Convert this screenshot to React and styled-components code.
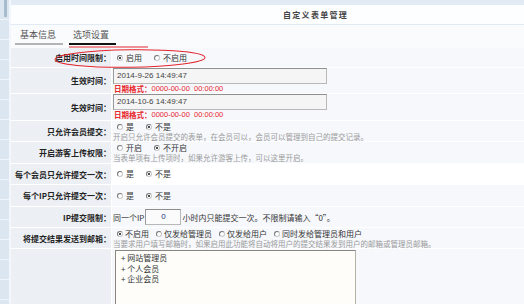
import React from "react";
import styled, { createGlobalStyle } from "styled-components";

const GlobalStyle = createGlobalStyle`
  html, body { margin: 0; padding: 0; background: #fff; }
  body { font-family: "Noto Sans CJK SC", "Liberation Sans", sans-serif; color: #333; }
  * { box-sizing: border-box; }
`;

const Page = styled.div`
  position: relative;
  display: flex;
  width: 524px;
  height: 304px;
  overflow: hidden;
`;

const Sidebar = styled.div`
  width: 11px;
  flex: none;
  background: repeating-linear-gradient(180deg, #dbe6f1 0 19px, #eef4f9 19px 20px);
  border-right: 2px solid #f3f7fb;
  padding-left: 4px;
`;

const Thumb = styled.div`
  width: 3px;
  height: 17px;
  background: #a9bccf;
`;

const Main = styled.div`
  flex: 1;
  display: flex;
  flex-direction: column;
  min-width: 0;
  & > * { flex: none; }
`;

const TopBand = styled.div`
  height: 5px;
  background: #e2eaf3;
`;

const Header = styled.div`
  height: 20px;
  background: #fdfeff;
  border-bottom: 1px solid #e2eaf4;
  display: flex;
  align-items: center;
  padding-left: 272px;
  font-size: 8px;
  font-weight: bold;
  letter-spacing: 1.3px;
  color: #444;
`;

const TabBar = styled.div`
  height: 23px;
  background: #fafbfd;
  display: flex;
  align-items: flex-start;
  gap: 6px;
  padding: 0 0 0 4px;
`;

const Tab = styled.div`
  width: ${(p) => p.$w}px;
  height: 20px;
  padding-left: ${(p) => p.$pl}px;
  padding-top: 4px;
  font-size: 9px;
  line-height: 12px;
  color: #555;
  border-bottom: 2px solid ${(p) => (p.$active ? "#111" : "#b4b4b4")};
`;

const Table = styled.div`
  display: flex;
  flex-direction: column;
`;

const Row = styled.div`
  display: grid;
  grid-template-columns: 101px 1fr;
  height: ${(p) => p.$h}px;
  border-bottom: 1px solid #fff;
  flex: none;
`;

const Label = styled.div`
  background: #ecf0f5;
  border-right: 1px solid #fff;
  display: flex;
  align-items: center;
  justify-content: flex-end;
  font-size: 8px;
  font-weight: bold;
  color: #222;
  white-space: nowrap;
`;

const Value = styled.div`
  background: ${(p) => (p.$white ? "#ffffff" : "#f6f8fc")};
  display: flex;
  flex-direction: column;
  justify-content: ${(p) => (p.$top ? "flex-start" : "center")};
  padding-left: 1px;
  padding-top: ${(p) => p.$pt || 0}px;
  font-size: 8px;
  color: #333;
  white-space: nowrap;
  min-width: 0;
`;

const Radios = styled.div`
  display: flex;
  align-items: center;
  height: 10px;
`;

const RadioItem = styled.label`
  display: flex;
  align-items: center;
  margin-right: ${(p) => p.$mr ?? 8}px;
  line-height: 10px;
`;

const Dot = styled.span`
  width: 6px;
  height: 6px;
  border-radius: 50%;
  border: 1px solid #777;
  border-right-color: #c8c8c8;
  border-bottom-color: #c8c8c8;
  background: #fff;
  margin: 0 ${(p) => p.$gap ?? 3}px 0 4px;
  position: relative;
  flex: none;
  &::after {
    content: "";
    display: ${(p) => (p.$on ? "block" : "none")};
    position: absolute;
    left: 1px;
    top: 1px;
    width: 2px;
    height: 2px;
    border-radius: 50%;
    background: #111;
  }
`;

const Hint = styled.div`
  font-size: 7.5px;
  line-height: 9px;
  color: #9a9a9a;
`;

const DateHint = styled.div`
  display: flex;
  align-items: center;
  height: 9px;
  font-size: 7.5px;
  line-height: 9px;
  color: #e8252b;
  padding-left: 1px;
`;

const DateLabel = styled.span`
  font-family: "Noto Sans CJK SC", sans-serif;
  font-weight: bold;
`;

const DateFormat = styled.span`
  font-family: "Liberation Sans", sans-serif;
`;

const TextInput = styled.div`
  width: ${(p) => p.$w}px;
  height: ${(p) => p.$h}px;
  border: 1px solid #b8b8b8;
  border-top-color: #8e8e8e;
  border-left-color: #9a9a9a;
  background: ${(p) => p.$bg || "#f5f5f5"};
  font-family: "Liberation Sans", sans-serif;
  font-size: 8px;
  line-height: 12px;
  color: ${(p) => p.$color || "#444"};
  display: flex;
  align-items: center;
  justify-content: ${(p) => (p.$center ? "center" : "flex-start")};
  padding-left: ${(p) => (p.$center ? 0 : 3)}px;
  flex: none;
`;

const Inline = styled.div`
  display: flex;
  align-items: center;
  gap: 1px;
`;

const ListBox = styled.div`
  width: 241px;
  height: 60px;
  margin: 1px 0 0 2px;
  border: 1px solid #b5b1a6;
  border-top-color: #8a8780;
  border-left-color: #8a8780;
  background: #fefdfa;
  padding: 2px 0 0 5px;
  font-size: 8px;
  line-height: 10.5px;
  color: #333;
`;

const Overlay = styled.svg`
  position: absolute;
  left: 0;
  top: 0;
  pointer-events: none;
`;

function Radio({ on, children, mr, gap }) {
  return (
    <RadioItem $mr={mr}>
      <Dot $on={on} $gap={gap} />
      {children}
    </RadioItem>
  );
}

function DateRow({ label, value, h }) {
  return (
    <Row $h={h}>
      <Label>{label}</Label>
      <Value $top $pt={0}>
        <TextInput $w={214} $h={16}>{value}</TextInput>
        <DateHint>
          <DateLabel>日期格式：</DateLabel>
          <DateFormat>0000-00-00&nbsp;&nbsp;00:00:00</DateFormat>
        </DateHint>
      </Value>
    </Row>
  );
}

export default function App() {
  return (
    <>
      <GlobalStyle />
      <Page>
        <Sidebar>
          <Thumb />
        </Sidebar>
        <Main>
          <TopBand />
          <Header>自定义表单管理</Header>
          <TabBar>
            <Tab $w={48} $pl={5}>基本信息</Tab>
            <Tab $w={47} $pl={4} $active>选项设置</Tab>
          </TabBar>
          <Table>
            <Row $h={20}>
              <Label>启用时间限制：</Label>
              <Value>
                <Radios>
                  <Radio on>启用</Radio>
                  <Radio>不启用</Radio>
                </Radios>
              </Value>
            </Row>
            <DateRow h={26} label="生效时间：" value="2014-9-26 14:49:47" />
            <DateRow h={27} label="失效时间：" value="2014-10-6 14:49:47" />
            <Row $h={21}>
              <Label>只允许会员提交：</Label>
              <Value>
                <Radios>
                  <Radio>是</Radio>
                  <Radio on>不是</Radio>
                </Radios>
                <Hint>开启只允许会员提交的表单，在会员可以，会员可以管理到自己的提交记录。</Hint>
              </Value>
            </Row>
            <Row $h={22}>
              <Label>开启游客上传权限：</Label>
              <Value>
                <Radios>
                  <Radio>开启</Radio>
                  <Radio on>不开启</Radio>
                </Radios>
                <Hint>当表单项有上传项时，如果允许游客上传，可以这里开启。</Hint>
              </Value>
            </Row>
            <Row $h={21}>
              <Label>每个会员只允许提交一次：</Label>
              <Value $white>
                <Radios>
                  <Radio>是</Radio>
                  <Radio on>不是</Radio>
                </Radios>
              </Value>
            </Row>
            <Row $h={22}>
              <Label>每个IP只允许提交一次：</Label>
              <Value>
                <Radios>
                  <Radio>是</Radio>
                  <Radio on>不是</Radio>
                </Radios>
              </Value>
            </Row>
            <Row $h={21}>
              <Label>IP提交限制：</Label>
              <Value>
                <Inline>
                  <span>同一个IP</span>
                  <TextInput $w={36} $h={16} $center $bg="#fbfbfb" $color="#22307a">0</TextInput>
                  <span>小时内只能提交一次。不限制请输入“0”。</span>
                </Inline>
              </Value>
            </Row>
            <Row $h={21}>
              <Label>将提交结果发送到邮箱：</Label>
              <Value>
                <Radios>
                  <Radio on mr={3} gap={2}>不启用</Radio>
                  <Radio mr={3} gap={2}>仅发给管理员</Radio>
                  <Radio mr={3} gap={2}>仅发给用户</Radio>
                  <Radio mr={3} gap={2}>同时发给管理员和用户</Radio>
                </Radios>
                <Hint>当要求用户填写邮箱时，如果启用此功能将自动将用户的提交结果发到用户的邮箱或管理员邮箱。</Hint>
              </Value>
            </Row>
            <Row $h={70}>
              <Label />
              <Value $top>
                <ListBox>
                  <div>+ 网站管理员</div>
                  <div>+ 个人会员</div>
                  <div>+ 企业会员</div>
                </ListBox>
              </Value>
            </Row>
          </Table>
        </Main>
        <Overlay width="524" height="304" viewBox="0 0 524 304">
          <line x1="69" y1="47" x2="148" y2="47" stroke="#e3262d" strokeWidth="1" />
          <ellipse cx="130" cy="58.5" rx="75" ry="8.8" fill="none" stroke="#e3262d" strokeWidth="1" transform="rotate(-0.8 130 58.5)" />
        </Overlay>
      </Page>
    </>
  );
}
